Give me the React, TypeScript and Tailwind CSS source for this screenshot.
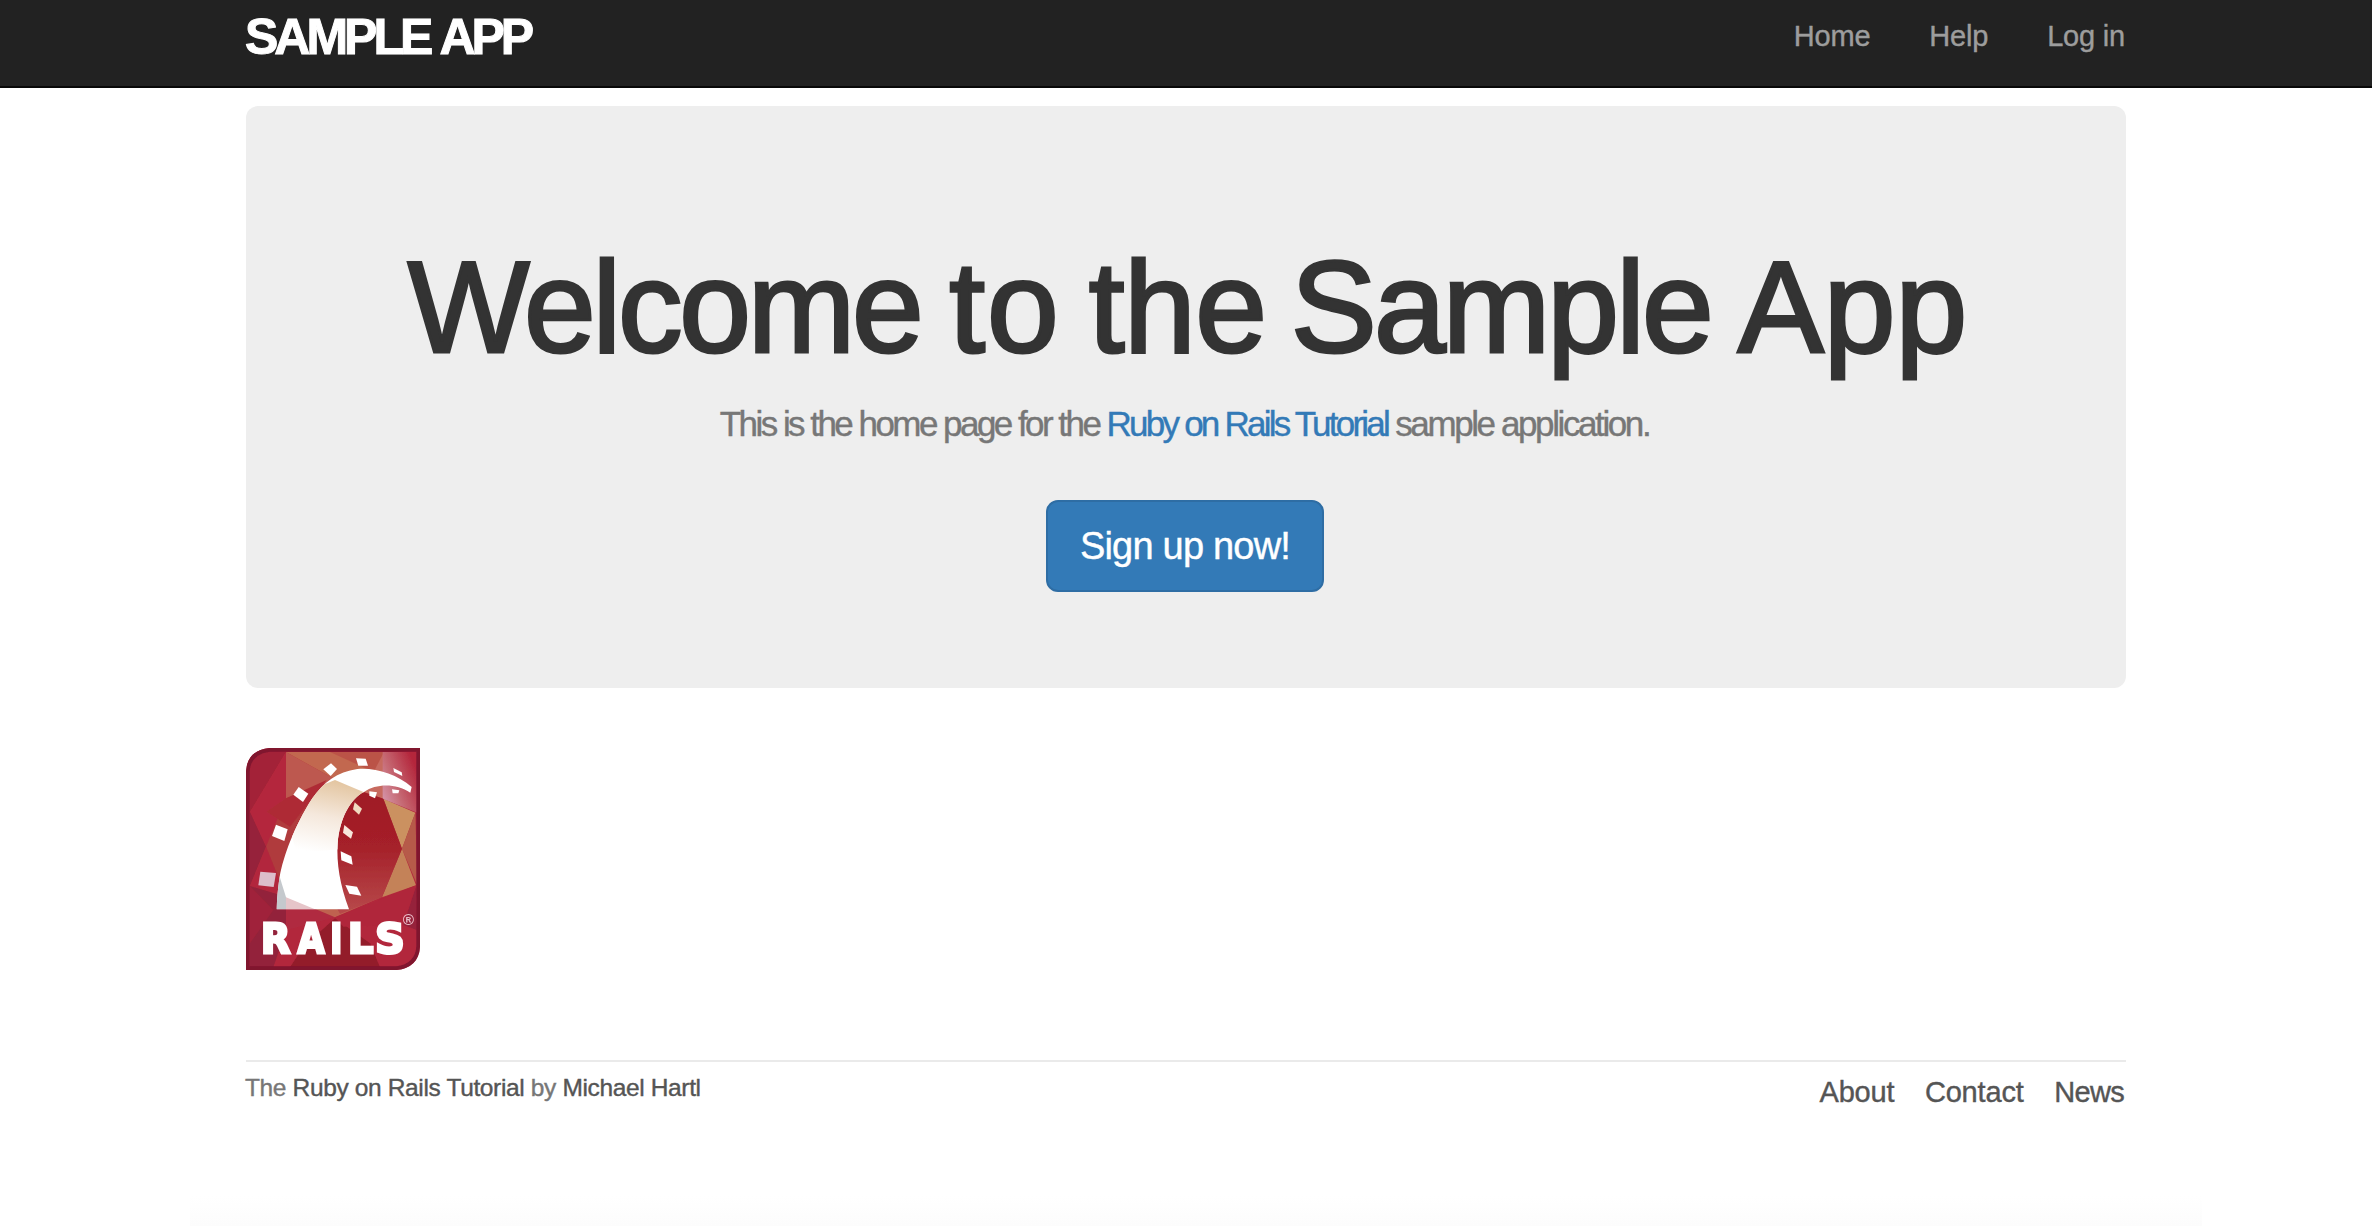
const facets: [string, string][] = [
  ["48,54 168,66 60,246", "#a32237"],
  ["168,66 168,205 108,350 60,246", "#b4283e"],
  ["168,66 315,148 168,208", "#bd594f"],
  ["168,66 462,66 400,186 315,148", "#c2684f"],
  ["300,66 462,66 440,130", "#bb5347"],
  ["462,66 400,186 460,206", "#c76a5e"],
  ["168,205 320,150 245,300 168,500 108,350", "#b03a3c"],
  ["168,205 290,150 180,290 110,245", "#ae2c34"],
  ["460,206 556,248 516,356", "#cb9160"],
  ["556,248 562,466 516,356", "#b65a49"],
  ["516,356 558,466 456,502", "#c48258"],
  ["60,246 108,350 60,468", "#96233a"],
  ["108,350 168,500 60,468", "#b2283d"],
  ["60,468 168,500 168,600 130,712 60,712", "#93223a"],
  ["60,468 130,540 60,640", "#a0233a"],
  ["168,500 315,562 168,600", "#b02b40"],
  ["168,500 240,520 456,500 315,562", "#bf6250"],
  ["315,565 420,640 450,712 180,712 220,650", "#931b2a"],
  ["315,562 558,466 520,585 340,590", "#b0263a"],
  ["558,470 560,600 520,585", "#96203a"],
];

const ties: [string, string][] = [
  ["91,425 138,429 131,471 85,466", "#dcbecb"],
  ["138,284 173,298 163,333 126,318", "#fff"],
  ["206,171 235,191 219,216 190,194", "#fff"],
  ["303,100 321,117 302,138 280,118", "#fff"],
  ["378,85 407,86 414,107 385,107", "#fff"],
  ["490,114 515,127 517,138 492,126", "#fff"],
  ["486,178 508,181 505,190 488,190", "#fff"],
  ["418,184 441,187 435,205 418,197", "#fff"],
  ["374,217 396,236 387,254 369,238", "#f0dbc0"],
  ["343,285 369,307 363,326 339,308", "#f8e6dc"],
  ["332,364 364,379 368,404 334,391", "#fff"],
  ["346,465 381,470 394,497 358,491", "#fff"],
];

const letters: [string, number, number][] = [
  ["R", 93, 88],
  ["A", 203, 80],
  ["I", 301, 36],
  ["L", 354, 76],
  ["S", 436, 88],
];

const arch =
  "M140 538 L357 538 C330 465 319 400 323 340 C329 265 362 205 402 186 C440 160 498 160 541 188 L545 171 C500 132 435 112 382 117 C322 125 280 158 247 205 C192 290 160 380 149 440 C143 480 141 510 140 538Z";

function RailsLogo() {
  return (
    <svg viewBox="48 54 522 666" className="block h-[222px] w-[174px]" role="img" aria-label="Rails logo">
      <defs>
        <clipPath id="card">
          <path d="M118 54 H570 V650 Q566 712 500 720 H48 V124 Q52 62 118 54Z" />
        </clipPath>
        <clipPath id="archClip">
          <path d={arch} />
        </clipPath>
        <linearGradient id="sand" x1="0.6" y1="0" x2="0.4" y2="1">
          <stop offset="0" stopColor="#e3c5a0" />
          <stop offset="0.5" stopColor="#f5e8dc" />
          <stop offset="1" stopColor="#fff" />
        </linearGradient>
        <linearGradient id="core" x1="0" y1="0" x2="0" y2="1">
          <stop offset="0" stopColor="#9f1a26" />
          <stop offset="0.45" stopColor="#a52029" />
          <stop offset="1" stopColor="#b84a4b" />
        </linearGradient>
        <linearGradient id="corner" x1="0" y1="1" x2="1" y2="0.3">
          <stop offset="0" stopColor="#d9a0b8" />
          <stop offset="0.45" stopColor="#c66a74" />
          <stop offset="1" stopColor="#b4253b" />
        </linearGradient>
        <filter id="soft" x="-5%" y="-5%" width="110%" height="110%">
          <feGaussianBlur stdDeviation="2.2" />
        </filter>
      </defs>
      <g clipPath="url(#card)">
        <rect x="48" y="54" width="522" height="666" fill="#b2273c" />
        <g filter="url(#soft)">
          {facets.map(([points, fill]) => (
            <polygon key={points} points={points} fill={fill} />
          ))}
          <polygon points="458,66 562,66 562,248 458,206" fill="url(#corner)" />
          <polygon points="400,186 460,206 516,356 456,502 330,552 250,400 320,180" fill="url(#core)" />
          <path d={arch} fill="#fff" />
          <g clipPath="url(#archClip)">
            <polygon points="240,180 315,150 402,187 402,350 200,370 180,300" fill="url(#sand)" />
            <polygon points="130,420 149,440 168,502 168,545 130,545" fill="#c5c9cd" />
            <polygon points="168,502 255,538 168,545" fill="#e6c5c9" />
          </g>
          {ties.map(([points, fill]) => (
            <polygon key={points} points={points} fill={fill} />
          ))}
          <g fill="#fff" stroke="#fff" strokeWidth="9" fontFamily="DejaVu Sans, sans-serif" fontWeight="700" fontSize="121">
            {letters.map(([ch, x, width]) => (
              <text key={ch} x={x} y="669" textLength={width} lengthAdjust="spacingAndGlyphs">
                {ch}
              </text>
            ))}
          </g>
          <text x="518" y="586" fill="#e9bcc6" fontFamily="Liberation Sans, sans-serif" fontWeight="700" fontSize="46">
            ®
          </text>
        </g>
        <path
          d="M118 58 H566 V650 Q562 708 500 716 H52 V124 Q56 66 118 58Z"
          fill="none"
          stroke="#80142f"
          strokeWidth="14"
          filter="url(#soft)"
        />
      </g>
    </svg>
  );
}

export default function App() {
  return (
    <div className="flex h-[1226px] flex-col overflow-hidden bg-white font-['Liberation_Sans',Arial,sans-serif] [-webkit-text-stroke:0.4px_currentColor]">
      <header className="h-[88px] shrink-0 border-b-2 border-[#080808] bg-[#222]">
        <div className="mx-auto flex w-[1880px] items-start justify-between">
          <a
            href="#"
            className="-ml-px text-[50px] leading-[75px] font-bold tracking-[-4px] whitespace-nowrap text-white [-webkit-text-stroke:1px_#fff] [word-spacing:2px]"
          >
            SAMPLE APP
          </a>
          <nav className="mr-px flex gap-[59px] text-[29px] leading-[73px] tracking-[-0.2px] text-[#9d9d9d]">
            <a href="#">Home</a>
            <a href="#">Help</a>
            <a href="#">Log in</a>
          </nav>
        </div>
      </header>

      <main className="mx-auto w-[1880px]">
        <section className="mt-[18px] flex h-[582px] flex-col items-center rounded-xl bg-[#eee] pt-[131px] whitespace-nowrap">
          <h1 className="ml-[3px] text-[129px] leading-[140px] text-[#333] [-webkit-text-stroke:3px_#333]">
            <span className="tracking-[-3.2px] [word-spacing:-4px]">Welcome </span>
            <span className="tracking-[2px] [word-spacing:-10px]">to </span>
            <span className="tracking-[-0.5px] [word-spacing:-11px]">the </span>
            <span className="tracking-[-2.9px] [word-spacing:-6px]">Sample </span>
            <span className="tracking-[0px]">App</span>
          </h1>
          <h2 className="mt-[22px] mr-[3px] text-[35px] leading-[50px] tracking-[-2.54px] text-[#777]">
            This is the home page for the{" "}
            <a href="#" className="tracking-[-2.77px] text-[#337ab7]">
              Ruby on Rails Tutorial
            </a>{" "}
            <span className="tracking-[-2.4px]">sample application.</span>
          </h2>
          <a
            href="#"
            className="mt-[51px] mr-[2px] flex h-[92px] w-[278px] items-center justify-center rounded-xl border-2 border-[#2e6da4] bg-[#337ab7] text-[38px] tracking-[-0.79px] text-white"
          >
            Sign up now!
          </a>
        </section>

        <a href="#" className="mt-[60px] block w-[174px]">
          <RailsLogo />
        </a>

        <footer className="mt-[90px] flex items-start justify-between border-t-2 border-[#eaeaea] whitespace-nowrap text-[#555]">
          <small className="-ml-px pt-[11px] text-[24.5px] leading-[30px] tracking-[-0.36px] text-[#777]">
            The{" "}
            <a href="#" className="text-[#555]">
              Ruby on Rails Tutorial
            </a>{" "}
            by{" "}
            <a href="#" className="text-[#555]">
              Michael Hartl
            </a>
          </small>
          <nav className="mr-[2px] flex gap-[30.5px] pt-[12px] text-[29px] leading-[36px] tracking-[-0.17px]">
            <a href="#">About</a>
            <a href="#">Contact</a>
            <a href="#" className="tracking-[-0.67px]">
              News
            </a>
          </nav>
        </footer>
      </main>

      <div className="mr-[170px] ml-[190px] mt-auto h-[30px] bg-linear-to-b from-white to-[#fcfcfc]" />
    </div>
  );
}
